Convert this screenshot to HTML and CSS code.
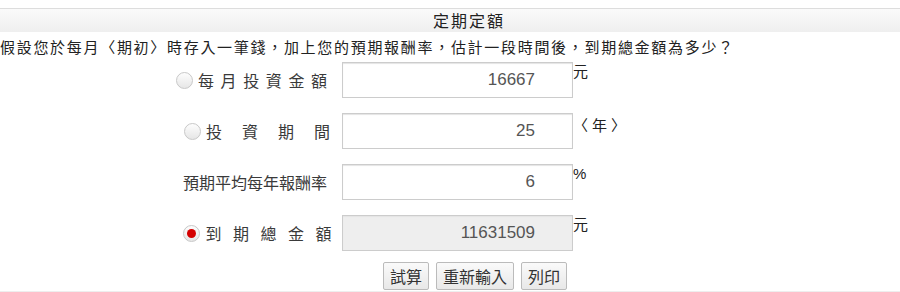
FILE: index.html
```html
<!DOCTYPE html>
<html lang="zh-Hant">
<head>
  <meta charset="UTF-8" />
  <meta name="viewport" content="width=device-width, initial-scale=1.0" />
  <title>定期定額</title>
  <link rel="stylesheet" href="styles.css">
</head>
<body>
  <div class="title-bar">定期定額</div>
  <p class="intro">假設您於每月〈期初〉時存入一筆錢，加上您的預期報酬率，估計一段時間後，到期總金額為多少？</p>

  <form class="calc" onsubmit="return false;">
    <div class="calc-grid">
      <label class="field-label">
        <input type="radio" name="target" class="radio">
        <span class="label-text spaced">每月投資金額</span>
      </label>
      <input type="text" class="num-input" value="16667">
      <span class="unit">元</span>

      <label class="field-label">
        <input type="radio" name="target" class="radio">
        <span class="label-text wide">投資期間</span>
      </label>
      <input type="text" class="num-input" value="25">
      <span class="unit unit-year">〈年〉</span>

      <label class="field-label">
        <span class="label-text">預期平均每年報酬率</span>
      </label>
      <input type="text" class="num-input" value="6">
      <span class="unit">%</span>

      <label class="field-label">
        <input type="radio" name="target" class="radio" checked>
        <span class="label-text wider">到期總金額</span>
      </label>
      <input type="text" class="num-input result" value="11631509" readonly>
      <span class="unit">元</span>
    </div>

    <div class="actions">
      <button type="button" class="btn">試算</button>
      <button type="reset" class="btn">重新輸入</button>
      <button type="button" class="btn" onclick="window.print()">列印</button>
    </div>
  </form>
</body>
</html>
```

FILE: styles.css
```css
body {
  margin: 0;
  font-family: "Liberation Sans", "Noto Sans CJK TC", sans-serif;
  color: #333;
  background: #fff;
}
.title-bar {
  margin-top: 8px;
  height: 23px;
  line-height: 23px;
  border-top: 1px solid #ddd;
  background: linear-gradient(#fafafa, #efefef);
  text-align: center;
  padding-left: 38px;
  font-family: "Noto Sans CJK TC", sans-serif;
  font-size: 16px;
  letter-spacing: 2px;
  color: #222;
}
.intro {
  margin: 4px 0 0 0;
  font-family: "Noto Sans CJK TC", sans-serif;
  font-size: 15px;
  line-height: 22px;
  letter-spacing: 1.7px;
  color: #222;
}
.calc {
  border-bottom: 1px solid #eee;
  padding-bottom: 1px;
}
.calc-grid {
  display: grid;
  grid-template-columns: 180px 231px 50px;
  grid-auto-rows: 36px;
  column-gap: 15px;
  row-gap: 15px;
  margin: 4px 0 0 147px;
  align-items: center;
}
.field-label {
  display: flex;
  align-items: center;
  justify-content: flex-end;
  font-family: "Noto Sans CJK TC", sans-serif;
  font-size: 16px;
  color: #3a3a3a;
}
.label-text {
  white-space: nowrap;
}
.label-text.spaced {
  letter-spacing: 6.6px;
  margin-right: -6.6px;
}
.label-text.wide {
  letter-spacing: 20px;
  margin-right: -23px;
}
.label-text.wider {
  letter-spacing: 11.5px;
  margin-right: -16px;
}
.radio {
  appearance: none;
  -webkit-appearance: none;
  width: 17px;
  height: 17px;
  margin: 0 5px 0 0;
  border: 1px solid #c8c8c8;
  border-radius: 50%;
  background: linear-gradient(#fdfdfd, #e6e6e6);
  position: relative;
}
.radio:checked::after {
  content: "";
  position: absolute;
  left: 3px;
  top: 3px;
  width: 9px;
  height: 9px;
  border-radius: 50%;
  background: #d40000;
}
.num-input {
  box-sizing: border-box;
  width: 231px;
  height: 36px;
  border: 1px solid #ccc;
  box-shadow: inset 0 1px 1px #e4e4e4;
  padding: 0 37px 0 4px;
  text-align: right;
  font-family: "Liberation Sans", sans-serif;
  font-size: 17px;
  color: #555;
  background: #fff;
}
.num-input.result {
  background: #eee;
}
.unit {
  align-self: start;
  margin-left: -15px;
  padding-top: 1px;
  line-height: 18px;
  font-size: 15px;
  color: #222;
}
.unit-year {
  padding-top: 4px;
  letter-spacing: 4px;
}
.actions {
  display: flex;
  gap: 7px;
  margin: 11px 0 0 383px;
}
.btn {
  height: 28px;
  padding: 0 6px;
  border: 1px solid #bbb;
  border-radius: 2px;
  background: linear-gradient(#fafafa, #e8e8e8);
  font-family: "Noto Sans CJK TC", sans-serif;
  font-size: 16px;
  color: #333;
  cursor: pointer;
}
```
